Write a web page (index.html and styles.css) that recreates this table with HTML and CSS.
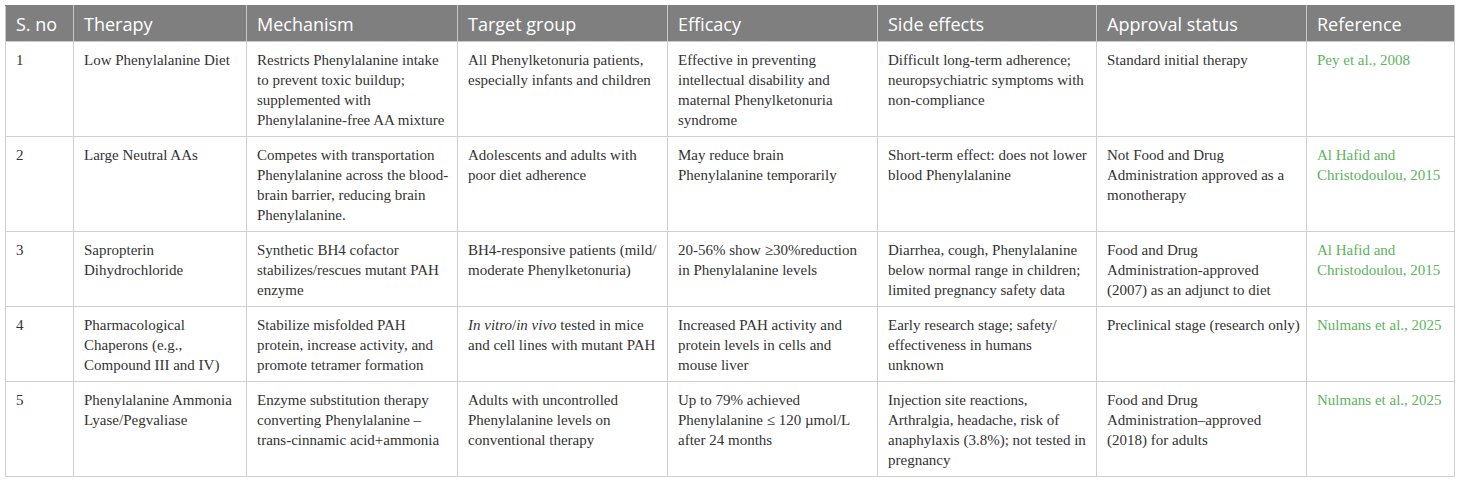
FILE: index.html
```html
<!DOCTYPE html>
<html lang="en">
<head>
<meta charset="utf-8">
<title>Phenylketonuria therapies</title>
<link rel="stylesheet" href="styles.css">
</head>
<body>
<div class="wrap">
<table class="tbl">
<colgroup>
<col class="c1"><col class="c2"><col class="c3"><col class="c4"><col class="c5"><col class="c6"><col class="c7"><col class="c8">
</colgroup>
<thead>
<tr>
<th>S. no</th><th>Therapy</th><th>Mechanism</th><th>Target group</th><th>Efficacy</th><th>Side effects</th><th>Approval status</th><th>Reference</th>
</tr>
</thead>
<tbody>
<tr>
<td>1</td>
<td>Low Phenylalanine Diet</td>
<td>Restricts Phenylalanine intake<br>to prevent toxic buildup;<br>supplemented with<br>Phenylalanine-free AA mixture</td>
<td>All Phenylketonuria patients,<br>especially infants and children</td>
<td>Effective in preventing<br>intellectual disability and<br>maternal Phenylketonuria<br>syndrome</td>
<td>Difficult long-term adherence;<br>neuropsychiatric symptoms with<br>non-compliance</td>
<td>Standard initial therapy</td>
<td><a class="ref">Pey et al., 2008</a></td>
</tr>
<tr>
<td>2</td>
<td>Large Neutral AAs</td>
<td>Competes with transportation<br>Phenylalanine across the blood-<br>brain barrier, reducing brain<br>Phenylalanine.</td>
<td>Adolescents and adults with<br>poor diet adherence</td>
<td>May reduce brain<br>Phenylalanine temporarily</td>
<td>Short-term effect: does not lower<br>blood Phenylalanine</td>
<td>Not Food and Drug<br>Administration approved as a<br>monotherapy</td>
<td><a class="ref">Al Hafid and<br>Christodoulou, 2015</a></td>
</tr>
<tr>
<td>3</td>
<td>Sapropterin<br>Dihydrochloride</td>
<td>Synthetic BH4 cofactor<br>stabilizes/rescues mutant PAH<br>enzyme</td>
<td>BH4-responsive patients (mild/<br>moderate Phenylketonuria)</td>
<td>20-56% show ≥30%reduction<br>in Phenylalanine levels</td>
<td>Diarrhea, cough, Phenylalanine<br>below normal range in children;<br>limited pregnancy safety data</td>
<td>Food and Drug<br>Administration-approved<br>(2007) as an adjunct to diet</td>
<td><a class="ref">Al Hafid and<br>Christodoulou, 2015</a></td>
</tr>
<tr>
<td>4</td>
<td>Pharmacological<br>Chaperons (e.g.,<br>Compound III and IV)</td>
<td>Stabilize misfolded PAH<br>protein, increase activity, and<br>promote tetramer formation</td>
<td><i>In vitro</i>/<i>in vivo</i> tested in mice<br>and cell lines with mutant PAH</td>
<td>Increased PAH activity and<br>protein levels in cells and<br>mouse liver</td>
<td>Early research stage; safety/<br>effectiveness in humans<br>unknown</td>
<td>Preclinical stage (research only)</td>
<td><a class="ref">Nulmans et al., 2025</a></td>
</tr>
<tr>
<td>5</td>
<td>Phenylalanine Ammonia<br>Lyase/Pegvaliase</td>
<td>Enzyme substitution therapy<br>converting Phenylalanine –<br>trans-cinnamic acid+ammonia</td>
<td>Adults with uncontrolled<br>Phenylalanine levels on<br>conventional therapy</td>
<td>Up to 79% achieved<br>Phenylalanine ≤ 120 µmol/L<br>after 24 months</td>
<td>Injection site reactions,<br>Arthralgia, headache, risk of<br>anaphylaxis (3.8%); not tested in<br>pregnancy</td>
<td>Food and Drug<br>Administration–approved<br>(2018) for adults</td>
<td><a class="ref">Nulmans et al., 2025</a></td>
</tr>
</tbody>
</table>
</div>
</body>
</html>
```
FILE: styles.css
```css
html, body {
  margin: 0;
  padding: 0;
  background: #ffffff;
}
.wrap {
  padding: 5px;
}
.tbl {
  border-collapse: collapse;
  table-layout: fixed;
  width: 1449px;
}
.c1 { width: 68px; }
.c2 { width: 173px; }
.c3 { width: 211px; }
.c4 { width: 210px; }
.c5 { width: 210px; }
.c6 { width: 219px; }
.c7 { width: 210px; }
.c8 { width: 148px; }
.tbl th {
  background: #7f7f7f;
  color: #ffffff;
  font-family: "Open Sans", "Noto Sans", sans-serif;
  font-weight: 400;
  font-size: 18px;
  line-height: 26px;
  text-align: left;
  padding: 5px 10px 4px;
  border: 1px solid #c9c9c9;
  border-top-color: #7f7f7f;
  white-space: nowrap;
}
.tbl td {
  font-family: "Liberation Serif", "Times New Roman", serif;
  font-size: 15px;
  line-height: 20px;
  color: #333333;
  vertical-align: top;
  padding: 8px 4px 6px 10px;
  border: 1px solid #cfcfcf;
  white-space: nowrap;
}
.ref {
  color: #5cb45c;
  text-decoration: none;
}
```
